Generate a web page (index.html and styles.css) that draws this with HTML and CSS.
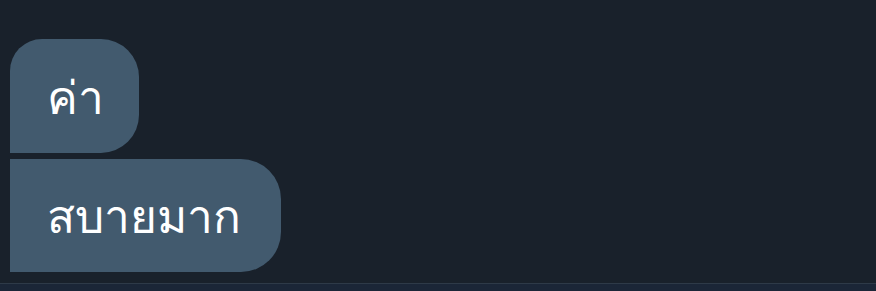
FILE: index.html
```html
<!DOCTYPE html>
<html lang="th">
<head>
<meta charset="utf-8">
<link rel="stylesheet" href="styles.css">
</head>
<body>
<main class="chat">
  <div class="bubble first">ค่า</div>
  <div class="bubble second">สบายมาก</div>
</main>
<footer class="bar"></footer>
</body>
</html>
```
FILE: styles.css
```css
html, body { margin: 0; padding: 0; }
body {
  width: 876px;
  height: 291px;
  background: #19212b;
  font-family: "DejaVu Sans", sans-serif;
  color: #ffffff;
  overflow: hidden;
  display: flex;
  flex-direction: column;
}
.chat {
  display: flex;
  flex-direction: column;
  align-items: flex-start;
  gap: 6px;
  padding: 39px 0 0 10px;
  height: 283px;
  flex-shrink: 0;
  box-sizing: border-box;
}
.bubble {
  flex-shrink: 0;
  background: #425a6e;
  display: flex;
  align-items: center;
  padding: 3px 40px 0 37px;
  font-size: 46px;
  line-height: 1;
  box-sizing: border-box;
}
.first {
  height: 114px;
  padding-right: 35px;
  border-radius: 32px 38px 38px 0;
}
.second {
  height: 113px;
  border-radius: 0 40px 40px 0;
}
.bar {
  flex: 1;
  border-top: 1px solid #2e3a48;
  background: #1b2637;
}
```
